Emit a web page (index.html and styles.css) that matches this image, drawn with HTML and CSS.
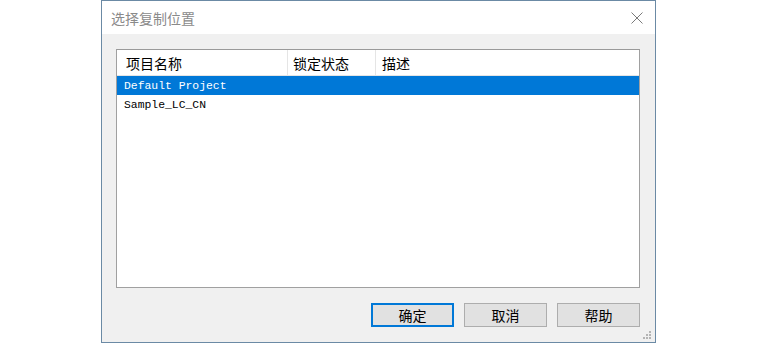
FILE: index.html
```html
<!DOCTYPE html>
<html lang="zh-CN">
<head>
    <meta charset="UTF-8">
    <title>选择复制位置</title>
    <link rel="stylesheet" href="styles.css">
</head>
<body>
    <div class="dialog">
        <div class="title-bar">
            <span class="title">选择复制位置</span>
            <svg class="close-icon" width="12" height="12" viewBox="0 0 12 12">
                <path d="M0.5 0.5 L11.5 11.5 M11.5 0.5 L0.5 11.5" stroke="#7a7a7a" stroke-width="1" fill="none"/>
            </svg>
        </div>

        <div class="dialog-body">
            <div class="list-box">
                <div class="list-header">
                    <div class="col col-name">项目名称</div>
                    <div class="col col-lock">锁定状态</div>
                    <div class="col col-desc">描述</div>
                </div>
                <div class="list-row selected">Default Project</div>
                <div class="list-row">Sample_LC_CN</div>
            </div>

            <div class="button-row">
                <button class="dlg-button default">确定</button>
                <button class="dlg-button">取消</button>
                <button class="dlg-button">帮助</button>
            </div>
        </div>

        <svg class="size-grip" width="11" height="11" viewBox="0 0 11 11">
            <rect x="7" y="1" width="2" height="2" fill="#b4b4b4"/>
            <rect x="4" y="4" width="2" height="2" fill="#b4b4b4"/>
            <rect x="7" y="4" width="2" height="2" fill="#b4b4b4"/>
            <rect x="1" y="7" width="2" height="2" fill="#b4b4b4"/>
            <rect x="4" y="7" width="2" height="2" fill="#b4b4b4"/>
            <rect x="7" y="7" width="2" height="2" fill="#b4b4b4"/>
        </svg>
    </div>
</body>
</html>
```

FILE: styles.css
```css
body {
    margin: 0;
    background: #ffffff;
    font-family: "Noto Sans CJK SC", "Liberation Sans", sans-serif;
    font-size: 14px;
    color: #000;
}

.dialog {
    position: relative;
    box-sizing: border-box;
    width: 555px;
    height: 343px;
    margin-left: 101px;
    border: 1px solid #6b8aa5;
    background: #f0f0f0;
    display: flex;
    flex-direction: column;
}

.title-bar {
    height: 33px;
    background: #ffffff;
    display: flex;
    align-items: center;
    justify-content: space-between;
    padding: 0 12px 0 9px;
    flex-shrink: 0;
}

.title {
    color: #8a8a8a;
    font-size: 14px;
    line-height: 14px;
    margin-top: 1px;
}

.close-icon {
    display: block;
    margin-top: 1px;
}

.dialog-body {
    padding: 15px 15px 0 14px;
    display: flex;
    flex-direction: column;
}

.list-box {
    box-sizing: border-box;
    height: 239px;
    background: #ffffff;
    border: 1px solid #a0a0a0;
    border-top-color: #9a9a9a;
}

.list-header {
    display: flex;
    height: 25px;
    border-bottom: 1px solid #e5e5e5;
}

.col {
    box-sizing: border-box;
    display: flex;
    align-items: center;
    font-size: 14px;
    line-height: 14px;
    border-right: 1px solid #e5e5e5;
}

.col-name {
    width: 171px;
    padding-left: 9px;
}

.col-lock {
    width: 88px;
    padding-left: 5px;
}

.col-desc {
    flex: 1;
    padding-left: 6px;
    border-right: none;
}

.list-row {
    height: 19px;
    line-height: 21px;
    padding-left: 7px;
    font-family: "Liberation Mono", monospace;
    font-size: 11.4px;
    color: #000;
}

.list-row.selected {
    background: #0078d7;
    color: #ffffff;
}

.button-row {
    display: flex;
    justify-content: flex-end;
    gap: 10px;
    margin-top: 15px;
}

.dlg-button {
    box-sizing: border-box;
    width: 83px;
    height: 24px;
    padding: 0;
    background: #e1e1e1;
    border: 1px solid #adadad;
    font-family: "Noto Sans CJK SC", sans-serif;
    font-size: 14px;
    line-height: 14px;
    color: #000;
}

.dlg-button.default {
    border: 2px solid #0078d7;
}

.size-grip {
    position: absolute;
    right: 2px;
    bottom: 1px;
}
```
